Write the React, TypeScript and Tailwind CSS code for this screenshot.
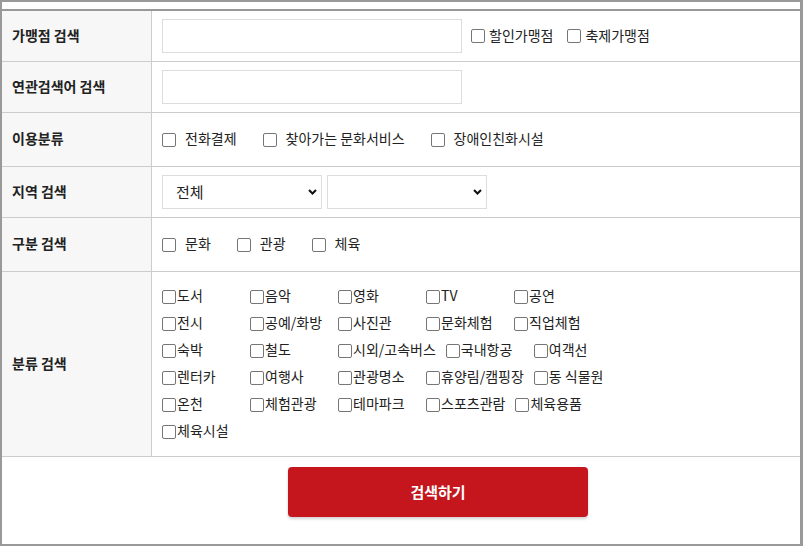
import type { ReactNode } from 'react'

const GRID: string[][] = [
  ['도서', '음악', '영화', 'TV', '공연'],
  ['전시', '공예/화방', '사진관', '문화체험', '직업체험'],
  ['숙박', '철도', '시외/고속버스', '국내항공', '여객선'],
  ['렌터카', '여행사', '관광명소', '휴양림/캠핑장', '동 식물원'],
  ['온천', '체험관광', '테마파크', '스포츠관람', '체육용품'],
  ['체육시설'],
]

function Box() {
  return (
    <input
      type="checkbox"
      className="h-[14px] w-[14px] shrink-0 appearance-none rounded-[2px] border border-[#767676] bg-white"
    />
  )
}

function Row({ label, h, children }: { label: string; h: string; children: ReactNode }) {
  return (
    <div className={`flex ${h} border-b border-[#cccccc]`}>
      <div className="flex w-[150px] shrink-0 items-center border-r border-[#cccccc] bg-[#f7f7f7] pb-[2px] pl-[10px] text-[14px] font-bold text-[#222]">
        {label}
      </div>
      <div className="flex flex-1 items-center pl-[10px]">{children}</div>
    </div>
  )
}

function Spaced({ items }: { items: string[] }) {
  return (
    <div className="flex items-center gap-[26px]">
      {items.map((t) => (
        <label key={t} className="flex items-center">
          <Box />
          <span className="ml-[9px] -translate-y-px">{t}</span>
        </label>
      ))}
    </div>
  )
}

function Chevron() {
  return (
    <svg className="pointer-events-none absolute right-[5px] top-1/2 -translate-y-1/2" width="9" height="6" viewBox="0 0 9 6">
      <path d="M1 1l3.5 3.5L8 1" fill="none" stroke="#111" strokeWidth="2" />
    </svg>
  )
}

function Select({ value }: { value: string }) {
  return (
    <div className="relative h-[34px] w-[160px]">
      <div className="flex h-full w-full items-center border border-[#dddddd] bg-white pl-[13px] text-[15px] text-[#222]">
        {value}
      </div>
      <Chevron />
    </div>
  )
}

export default function App() {
  return (
    <div className="h-[546px] w-[803px] border-b-2 border-l-2 border-r-[3px] border-t-2 border-[#999999] bg-white font-['Noto_Sans_CJK_KR',sans-serif] text-[14px] text-[#222]">
      <div className="mt-[7px] border-t-2 border-[#999999]">
        <Row label="가맹점 검색" h="h-[51px]">
          <input className="h-[34px] w-[300px] border border-[#dddddd] bg-white" />
          <label className="ml-[9px] flex items-center">
            <Box />
            <span className="ml-[4px] -translate-y-px">할인가맹점</span>
          </label>
          <label className="ml-[14px] flex items-center">
            <Box />
            <span className="ml-[4px] -translate-y-px">축제가맹점</span>
          </label>
        </Row>
        <Row label="연관검색어 검색" h="h-[51px]">
          <input className="h-[34px] w-[300px] border border-[#dddddd] bg-white" />
        </Row>
        <Row label="이용분류" h="h-[54px]">
          <Spaced items={['전화결제', '찾아가는 문화서비스', '장애인친화시설']} />
        </Row>
        <Row label="지역 검색" h="h-[51px]">
          <div className="flex gap-[5px]">
            <Select value="전체" />
            <Select value="" />
          </div>
        </Row>
        <Row label="구분 검색" h="h-[54px]">
          <Spaced items={['문화', '관광', '체육']} />
        </Row>
        <Row label="분류 검색" h="h-[185px]">
          <div className="flex flex-col">
            {GRID.map((line, i) => (
              <div key={i} className="flex h-[27px] items-center">
                {line.map((t) => (
                  <label key={t} className="mr-[10px] flex min-w-[78px] shrink-0 items-center">
                    <Box />
                    <span className="ml-px -translate-y-px whitespace-nowrap">{t}</span>
                  </label>
                ))}
              </div>
            ))}
          </div>
        </Row>
      </div>
      <div className="mt-[10px] flex pl-[286px]">
        <button className="h-[50px] w-[300px] rounded-[4px] bg-[#c4161c] text-[15px] font-bold text-white shadow-[0_2px_3px_rgba(0,0,0,0.18)]">
          검색하기
        </button>
      </div>
    </div>
  )
}
